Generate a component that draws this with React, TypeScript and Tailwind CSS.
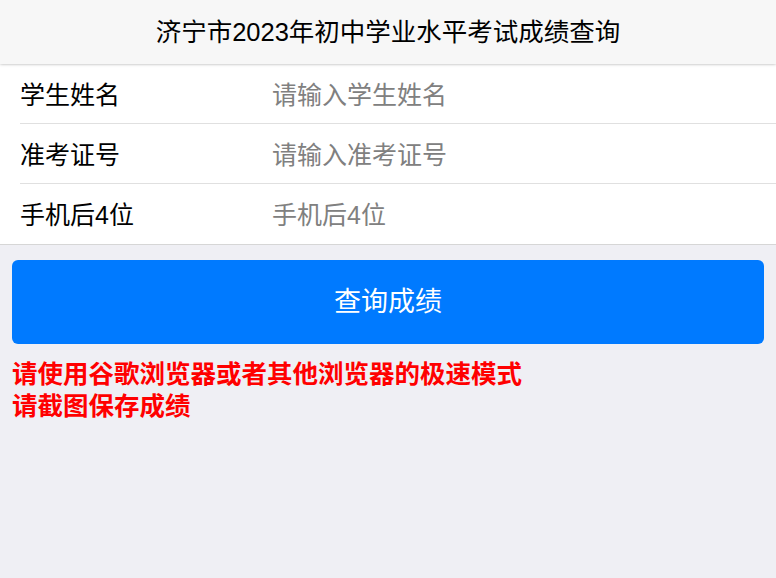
const rows = [
  { label: "学生姓名", placeholder: "请输入学生姓名" },
  { label: "准考证号", placeholder: "请输入准考证号" },
  { label: "手机后4位", placeholder: "手机后4位" },
];

export default function App() {
  return (
    <div className="min-h-[578px] bg-[#efeff4] font-['Liberation_Sans','Noto_Sans_CJK_SC',sans-serif]">
      {/* header */}
      <header className="relative z-10 flex h-16 items-center justify-center bg-[#f7f7f7] shadow-[0_0_3px_rgba(0,0,0,0.35)]">
        <h1 className="text-[25.5px] font-normal text-black">济宁市2023年初中学业水平考试成绩查询</h1>
      </header>

      {/* form */}
      <form className="border-b border-[#d6d6d6] bg-white">
        {rows.map((row, i) => (
          <div
            key={row.label}
            className={`ml-5 flex h-[60px] items-center pt-1 ${i < rows.length - 1 ? "border-b border-[#e0e0e0]" : ""}`}
          >
            <label className="w-[252px] text-[25px] text-black">{row.label}</label>
            <input
              type="text"
              placeholder={row.placeholder}
              className="flex-1 bg-transparent text-[25px] text-black outline-none placeholder:text-[#808080]"
            />
          </div>
        ))}
      </form>

      <div className="px-3 pt-[15px]">
        <button
          type="button"
          className="flex h-[84px] w-full items-center justify-center rounded-md bg-[#007aff] text-[27px] text-white"
        >
          查询成绩
        </button>
        <div className="mt-[14px] text-[25.5px] font-bold leading-[32px] text-[#ff0000]">
          <p>请使用谷歌浏览器或者其他浏览器的极速模式</p>
          <p>请截图保存成绩</p>
        </div>
      </div>
    </div>
  );
}
